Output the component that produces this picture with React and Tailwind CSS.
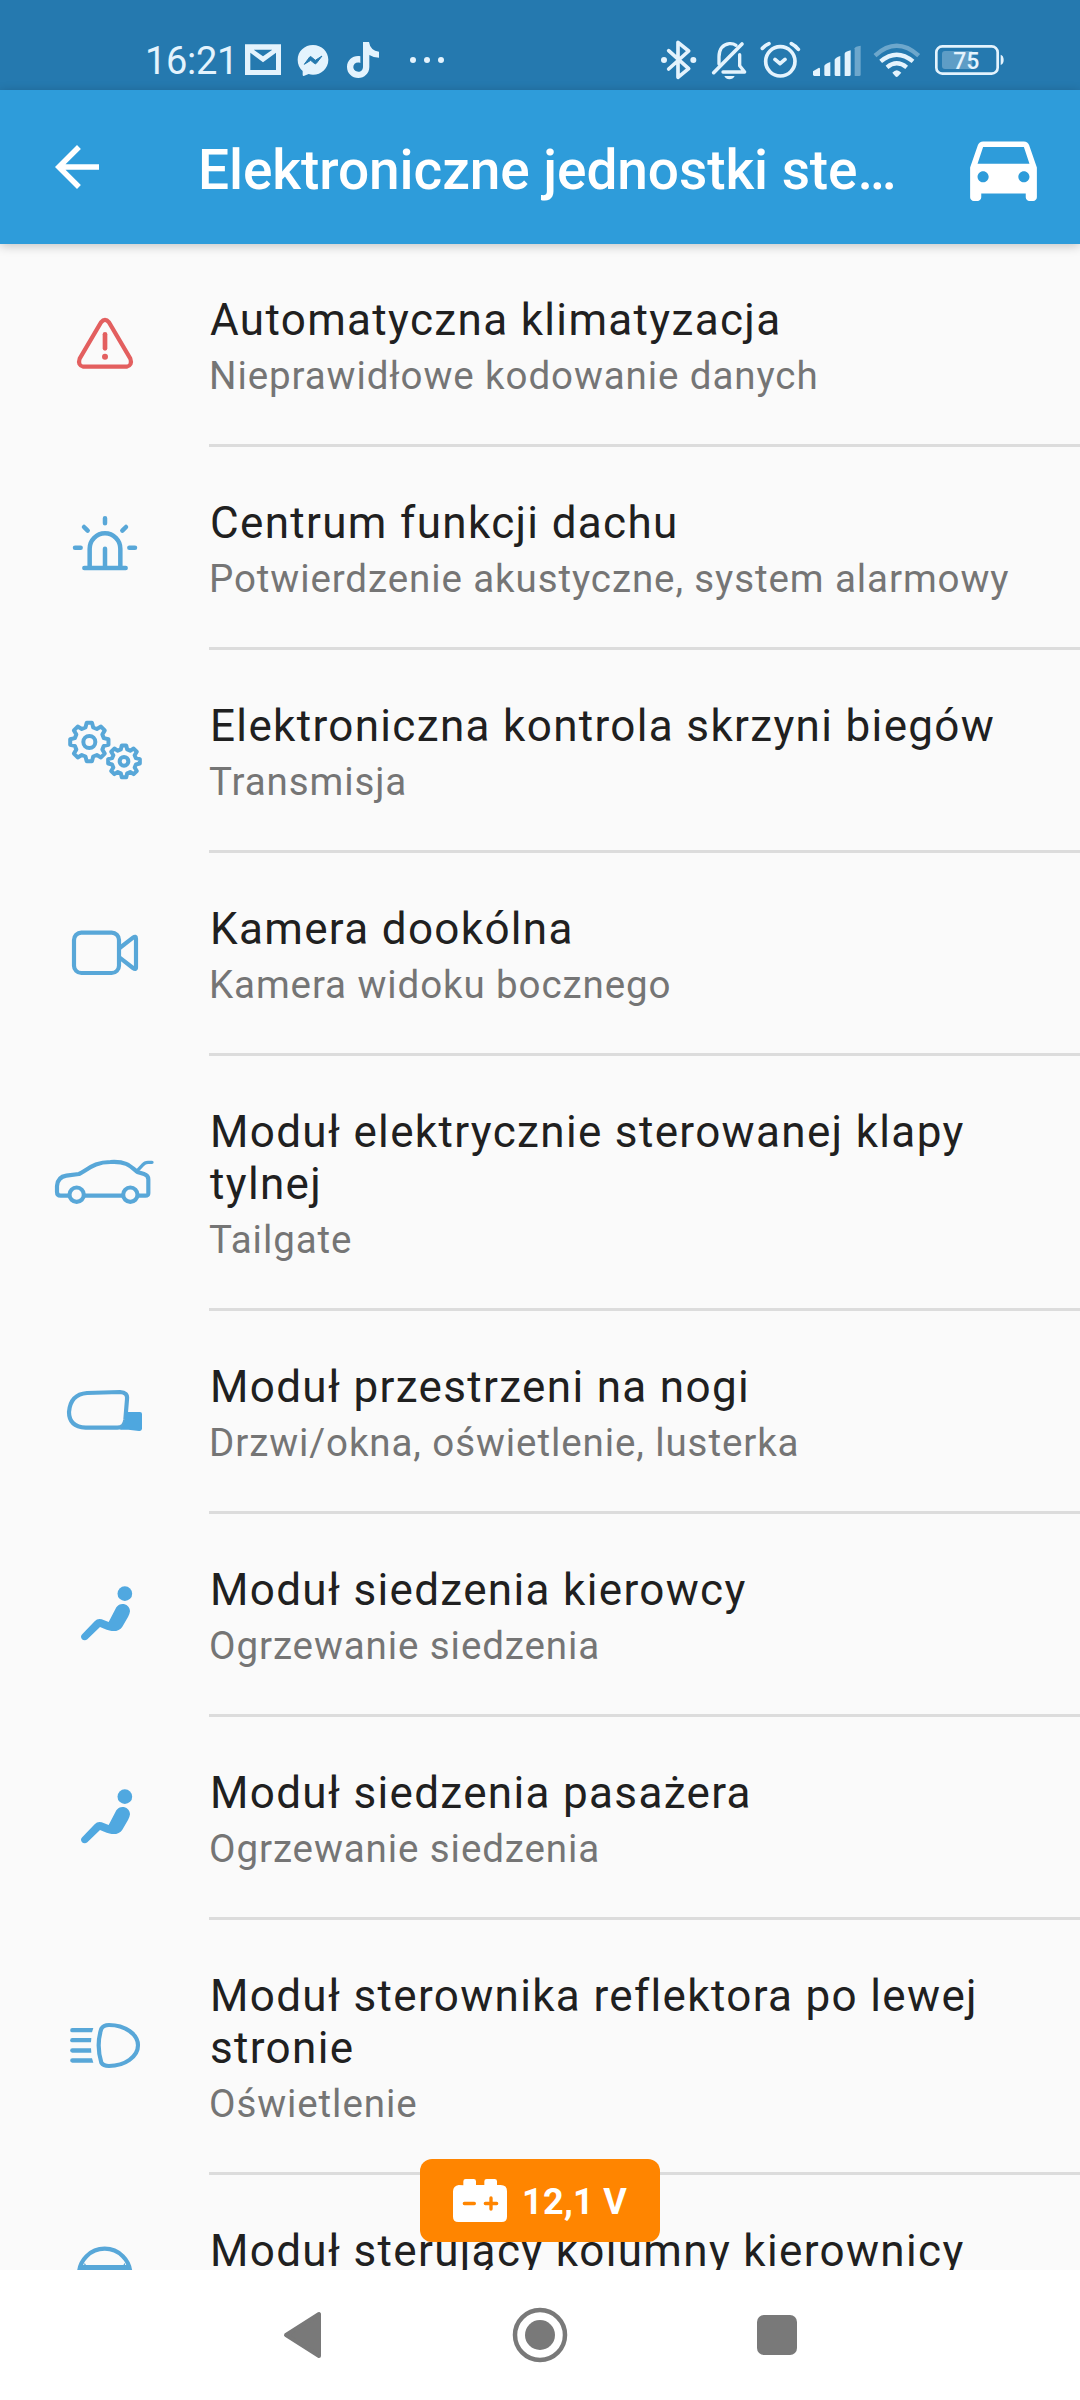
import React from "react";

const BLUE = "#58a7d8";

function gearPath(cx, cy, outer, inner) {
  const pts = [];
  const at = (r, deg) => {
    const a = (deg * Math.PI) / 180;
    return (cx + r * Math.cos(a)).toFixed(1) + " " + (cy + r * Math.sin(a)).toFixed(1);
  };
  for (let i = 0; i < 8; i++) {
    const c = i * 45;
    pts.push(at(inner, c - 15), at(outer, c - 8), at(outer, c + 8), at(inner, c + 15));
  }
  return "M" + pts.join("L") + "Z";
}

function RowIcon({ cy, children, color = BLUE, width = 12.5 }) {
  return (
    <svg
      className="h-20 w-[110px]"
      viewBox={`30 ${cy - 120} 330 240`}
      fill="none"
      stroke={color}
      strokeWidth={width}
      strokeLinecap="round"
      strokeLinejoin="round"
    >
      {children}
    </svg>
  );
}

const WarningIcon = () => (
  <RowIcon cy={162} color="#e35f5f">
    <path d="M183 97Q195 82 207 97L271 206Q278 226 260 230H130Q112 226 119 206Z" />
    <path d="M195 133V175" strokeWidth="14" />
    <circle cx="195" cy="200" r="9" fill="#e35f5f" stroke="none" />
  </RowIcon>
);

const SirenIcon = () => (
  <RowIcon cy={771} width={13.5}>
    <path d="M133 834H257M149 832V776a46 46 0 0 1 92 0V832M195 776V832M195 685V700M132 711L143 722M258 711L247 722M105 773H122M268 773H285" />
  </RowIcon>
);

const GearsIcon = () => (
  <RowIcon cy={150} width={12}>
    <path d={gearPath(148, 126, 58, 45)} />
    <circle cx="148" cy="126" r="18" />
    <path d={gearPath(252, 184, 48, 37)} />
    <circle cx="252" cy="184" r="13" />
  </RowIcon>
);

const CameraIcon = () => (
  <RowIcon cy={759}>
    <rect x="102" y="698" width="135" height="121" rx="22" />
    <path d="M239 744L279 713Q288 706 288 716V802Q288 811 279 804L239 773" />
  </RowIcon>
);

const TailgateIcon = () => (
  <RowIcon cy={156}>
    <path d="M84 197H62Q51 197 51 186V168Q53 141 79 137L117 132C144 119 162 96 211 96C258 93 270 107 292 126L312 132Q325 136 325 148V190Q325 197 316 197H297M136 197H245" />
    <path d="M292 122L309 104Q314 97 324 97H336" strokeWidth="10" />
    <circle cx="110" cy="194" r="21.500" />
    <circle cx="271" cy="194" r="21.500" />
  </RowIcon>
);

const MirrorIcon = () => (
  <RowIcon cy={843}>
    <path d="M141 789L240 786Q264 787 261 808L256 869Q253 893 232 893H137Q87 890 87 846Q91 793 141 789Z" />
    <path d="M264 846H300Q306 846 306 852V897Q304 904 297 903L265 899H240Q252 890 255 870L257 840Z" fill="#4ea7df" stroke="none" />
  </RowIcon>
);

const SeatIcon = () => (
  <RowIcon cy={162}>
    <g fill="#50a8e0" stroke="none">
      <circle cx="254.500" cy="101" r="22" />
      <path d="M229 142C240 124 270 131 270 154Q269 162 264 171L247 200Q237 215 215 213Q203 211 180 201L142 238C134 245 122 239 123 229Q124 225 128 221L164 184Q173 174 185 178L206 186Z" />
    </g>
  </RowIcon>
);

const HeadlightIcon = () => (
  <RowIcon cy={138}>
    <path d="M207 75C255 75 294 103 294 136C294 170 255 198 207 198Q190 198 184 188Q168 136 184 86Q190 75 207 75Z" />
    <g fill={BLUE} stroke="none">
      <path d="M97 84H160L156 97H97a6.500 6.500 0 0 1 0-13Z" />
      <path d="M97 114H154L153 127H97a6.500 6.500 0 0 1 0-13Z" />
      <path d="M97 145H153L154 158H97a6.500 6.500 0 0 1 0-13Z" />
      <path d="M97 175H156L160 188H97a6.500 6.500 0 0 1 0-13Z" />
    </g>
  </RowIcon>
);

const SteeringIcon = () => (
  <RowIcon cy={825}>
    <circle cx="194" cy="823" r="77" />
    <path d="M117 795H271V812H117Z" fill={BLUE} stroke="none" />
    <path d="M134 788Q136 796 144 797H132ZM254 788Q252 796 244 797H256Z" fill={BLUE} stroke="none" />
  </RowIcon>
);

const units = [
  { title: "Automatyczna klimatyzacja", sub: "Nieprawidłowe kodowanie danych", Icon: WarningIcon },
  { title: "Centrum funkcji dachu", sub: "Potwierdzenie akustyczne, system alarmowy", Icon: SirenIcon },
  { title: "Elektroniczna kontrola skrzyni biegów", sub: "Transmisja", Icon: GearsIcon },
  { title: "Kamera dookólna", sub: "Kamera widoku bocznego", Icon: CameraIcon },
  { title: "Moduł elektrycznie sterowanej klapy tylnej", sub: "Tailgate", Icon: TailgateIcon },
  { title: "Moduł przestrzeni na nogi", sub: "Drzwi/okna, oświetlenie, lusterka", Icon: MirrorIcon },
  { title: "Moduł siedzenia kierowcy", sub: "Ogrzewanie siedzenia", Icon: SeatIcon },
  { title: "Moduł siedzenia pasażera", sub: "Ogrzewanie siedzenia", Icon: SeatIcon },
  { title: "Moduł sterownika reflektora po lewej stronie", sub: "Oświetlenie", Icon: HeadlightIcon },
  { title: "Moduł sterujący kolumny kierownicy", sub: "", Icon: SteeringIcon },
];

function StatusBar() {
  return (
    <div className="flex h-[90px] shrink-0 items-end bg-[#2579af] text-[#e4f3fd]">
      <div className="flex h-[70px] w-[242px] pl-[145px] pt-[19px] text-[38px] leading-[44px] tracking-[-0.3px]">16:21</div>
      <svg className="h-[70px] w-[46px]" viewBox="366 0 138 210" fill="currentColor">
        <path fillRule="evenodd" d="M375 73H483V165H375ZM391 98V150H468V98L429 127ZM401 89L429 109L457 89Z" />
      </svg>
      <svg className="h-[70px] w-[51px]" viewBox="504 0 153 210" fill="currentColor">
        <path d="M579 75C605 75 625 95 625 119C625 145 604 164 579 164Q572 164 566 162L551 168Q548 168 548 164V153Q533 140 533 119C533 94 554 75 579 75Z" />
        <path d="M553 133L569 111Q571 108 574 111L586 121L606 108L589 130Q586 133 583 130L572 121Z" fill="#2579af" stroke="#2579af" strokeWidth="3" strokeLinejoin="round" />
      </svg>
      <svg className="h-[70px] w-[51px]" viewBox="657 0 153 210" fill="currentColor">
        <path d="M729 66H747Q751 92 777 95V113Q760 113 748 105V141C748 160 733 174 715 174C696 174 681 160 681 141C681 120 700 105 721 109V129C709 125 700 132 700 141C700 149 707 155 715 155C723 155 729 149 729 140Z" />
      </svg>
      <svg className="h-[70px] w-[70px]" viewBox="810 0 210 210" fill="currentColor">
        <circle cx="879" cy="120" r="9" />
        <circle cx="921" cy="120" r="9" />
        <circle cx="963" cy="120" r="9" />
      </svg>
      <div className="ml-auto mr-[73px] flex">
        <svg className="h-[70px] w-[44px]" viewBox="54 0 132 210" fill="none" stroke="currentColor" strokeWidth="11" strokeLinecap="round" strokeLinejoin="round">
          <path d="M86 92L146 146L114 172V67L146 93L86 147" />
          <circle cx="72" cy="120" r="9" fill="currentColor" stroke="none" />
          <circle cx="160" cy="120" r="9" fill="currentColor" stroke="none" />
        </svg>
        <svg className="h-[70px] w-[52px]" viewBox="186 0 156 210" fill="none" stroke="currentColor" strokeWidth="10" strokeLinecap="round" strokeLinejoin="round">
          <path d="M221 158L306 72" strokeWidth="11" />
          <path d="M237 132V110Q238 75 268 71Q280 70 288 76M249 156H314L299 137V104" />
          <path d="M253 168H284Q279 178 268 178Q258 178 253 168Z" fill="currentColor" stroke="none" />
        </svg>
        <svg className="h-[70px] w-[53px]" viewBox="342 0 159 210" fill="none" stroke="currentColor" strokeWidth="11" strokeLinecap="round" strokeLinejoin="round">
          <circle cx="421" cy="124" r="44" />
          <path d="M405 118L420 131L435 118M367 85Q376 76 387 71M454 71Q466 77 475 88" />
        </svg>
        <svg className="h-[70px] w-[60px]" viewBox="501 0 180 210" fill="currentColor">
          <path d="M519 154L537 143Q540 143 540 147V168H523Q519 168 519 163Z" />
          <path d="M553 138Q554 132 571 126V168H557Q553 168 553 164Z" />
          <path d="M584 119Q586 113 601 108V168H588Q584 168 584 164Z" />
          <path d="M614 101Q615 95 632 91V164Q632 168 628 168H614Z" />
          <path d="M644 85Q645 79 662 77V164Q662 168 658 168H644Z" opacity=".38" />
        </svg>
        <svg className="h-[70px] w-[60px]" viewBox="681 0 180 210" fill="none" stroke="currentColor" strokeWidth="13">
          <path d="M705 107Q770 48 836 107" opacity=".38" />
          <path d="M722 124Q770 84 819 124M741 142Q770 118 800 142" />
          <path d="M757 158Q770 143 784 158L774 169Q770 173 766 169Z" fill="currentColor" stroke="none" />
        </svg>
        <svg className="h-[70px] w-[80px]" viewBox="861 0 240 210" fill="none" stroke="currentColor" strokeWidth="8">
          <rect x="889" y="79" width="184" height="82" rx="18" />
          <path d="M915 93H997V147H915Q906 147 906 138V102Q906 93 915 93Z" fill="currentColor" opacity=".3" stroke="none" />
          <path d="M1082 104Q1091 107 1091 120Q1091 132 1082 135Z" fill="currentColor" stroke="none" />
          <text x="979" y="146" textAnchor="middle" fontSize="69" fontWeight="500" fill="currentColor" stroke="none">75</text>
        </svg>
      </div>
    </div>
  );
}

function AppBar() {
  return (
    <header className="relative z-10 flex h-[154px] shrink-0 items-center bg-[#2e9cda] pl-[44px] pr-[32px] text-white shadow-[0_2px_10px_rgba(0,0,0,0.22)]">
      <svg className="size-[66px]" viewBox="0 0 24 24" fill="currentColor">
        <path d="M20 11H7.830l5.590-5.590L12 4l-8 8 8 8 1.410-1.410L7.830 13H20v-2z" />
      </svg>
      <h1 className="ml-[88px] grow whitespace-nowrap text-[55px] font-medium leading-[64px] tracking-[-0.07px] pt-[5px]">Elektroniczne jednostki ste…</h1>
      <svg className="size-[89px]" viewBox="0 0 24 24" fill="currentColor">
        <path d="M18.920 6.010C18.720 5.420 18.160 5 17.500 5h-11c-.66 0-1.210.42-1.420 1.010L3 12v8c0 .55.45 1 1 1h1c.55 0 1-.45 1-1v-1h12v1c0 .55.45 1 1 1h1c.55 0 1-.45 1-1v-8l-2.080-5.990zM6.500 16c-.83 0-1.500-.67-1.500-1.500S5.670 13 6.500 13s1.500.67 1.500 1.500S7.330 16 6.500 16zm11 0c-.83 0-1.500-.67-1.500-1.500s.67-1.500 1.500-1.500 1.500.67 1.500 1.500-.67 1.500-1.500 1.500zM5 11l1.500-4.500h11L19 11H5z" />
      </svg>
    </header>
  );
}

function UnitRow({ title, sub, Icon }) {
  return (
    <li className="flex">
      <div className="flex w-[209px] shrink-0 items-center justify-end pb-[3px] pr-[49px]">
        <Icon />
      </div>
      <div className="grow border-b-[3px] border-[#dcdcdc] pb-[46px] pl-px pr-[44px] pt-[50px]">
        <div className="text-[44px] leading-[52px] tracking-[1.34px] text-[#202020]">{title}</div>
        <div className="-ml-px mt-[7px] min-h-[45px] text-[38.5px] leading-[45px] tracking-[0.91px] text-[#757575]">{sub}</div>
      </div>
    </li>
  );
}

function VoltageBadge() {
  return (
    <div className="absolute bottom-[28px] left-[420px] flex h-[83px] w-[240px] items-center rounded-[12px] bg-[#ff8500] pl-[33px] text-white">
      <svg className="h-[43px] w-[54px]" viewBox="159 117 162 129">
        <path d="M190 136V124Q190 117 197 117H221Q228 117 228 124V135H253V124Q253 117 260 117H284Q291 117 291 124V135H302Q321 135 321 154V230Q321 246 305 246H175Q159 246 159 230V154Q160 137 176 135Z" fill="currentColor" />
        <path d="M193 190.500H223M256 190.500H290M273 174V207" stroke="#ff8500" strokeWidth="10" strokeLinecap="round" />
      </svg>
      <span className="ml-[15px] whitespace-nowrap pt-[3px] text-[36px] font-bold tracking-[0.3px]">12,1 V</span>
    </div>
  );
}

function NavBar() {
  return (
    <nav className="flex h-[130px] shrink-0 items-center justify-between bg-white pl-[275px] pr-[275px] text-[#797979]">
      <svg className="size-[56px]" viewBox="275 2307 56 56" fill="currentColor" stroke="currentColor" strokeWidth="4" strokeLinejoin="round">
        <path d="M286 2335L319 2314V2356Z" />
      </svg>
      <svg className="size-[56px]" viewBox="0 0 56 56" fill="none" stroke="currentColor">
        <circle cx="28" cy="28" r="25" strokeWidth="4.500" />
        <circle cx="28" cy="28" r="15" fill="currentColor" stroke="none" />
      </svg>
      <div className="flex size-[56px] items-center justify-center">
        <div className="size-10 rounded-[7px] bg-current" />
      </div>
    </nav>
  );
}

export default function App() {
  return (
    <div className="flex h-[2400px] w-[1080px] flex-col overflow-hidden bg-[#fafafa] font-['Roboto',sans-serif]">
      <StatusBar />
      <AppBar />
      <main className="relative h-[2026px] shrink-0 overflow-hidden">
        <ul>
          {units.map((u) => (
            <UnitRow key={u.title} {...u} />
          ))}
        </ul>
        <VoltageBadge />
      </main>
      <NavBar />
    </div>
  );
}
